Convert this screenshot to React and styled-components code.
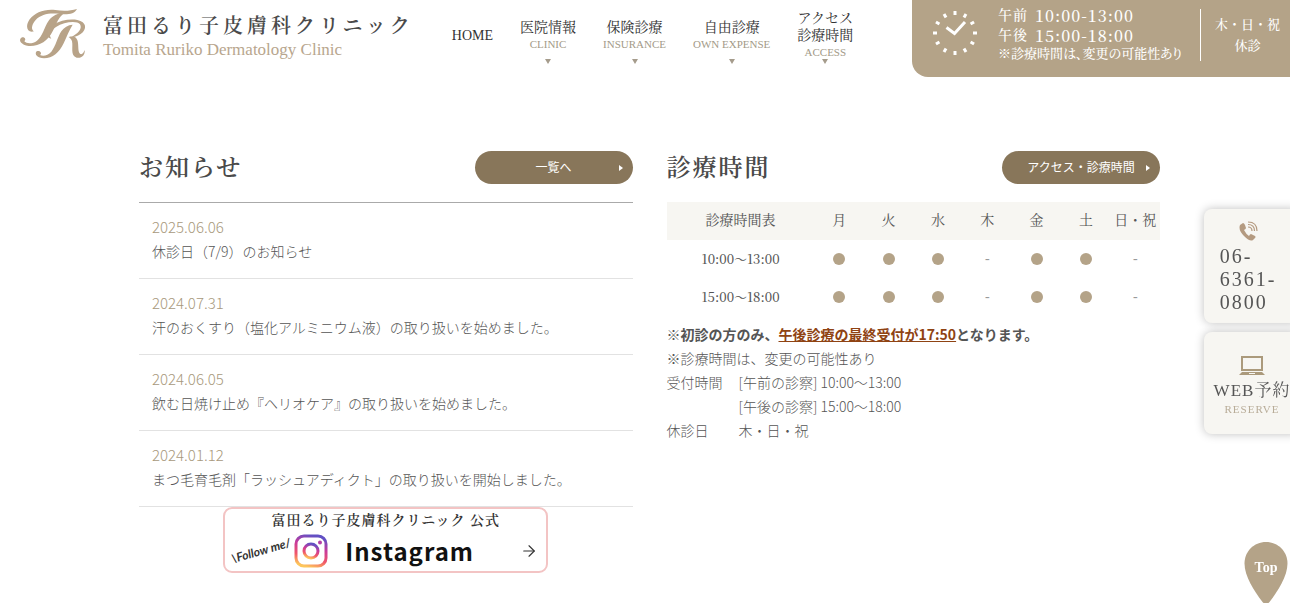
import React from "react"
import styled, { createGlobalStyle, css } from "styled-components"
import { FiArrowRight } from "react-icons/fi"

const serif = css`font-family: "Liberation Serif", "Noto Serif CJK JP", "Noto Sans CJK JP", serif;`
const mincho = css`font-family: "Noto Serif CJK JP", "Liberation Serif", "Noto Sans CJK JP", serif;`

const navItems = [
    { lines: ["医院情報"], sub: "CLINIC" },
    { lines: ["保険診療"], sub: "INSURANCE" },
    { lines: ["自由診療"], sub: "OWN EXPENSE" },
    { lines: ["アクセス", "診療時間"], sub: "ACCESS" },
]

const news = [
    { date: "2025.06.06", title: "休診日（7/9）のお知らせ" },
    { date: "2024.07.31", title: "汗のおくすり（塩化アルミニウム液）の取り扱いを始めました。" },
    { date: "2024.06.05", title: "飲む日焼け止め『ヘリオケア』の取り扱いを始めました。" },
    { date: "2024.01.12", title: "まつ毛育毛剤「ラッシュアディクト」の取り扱いを開始しました。" },
]

const days = ["月", "火", "水", "木", "金", "土", "日・祝"]
const openDays = [true, true, true, false, true, true, false]
const times = ["10:00～13:00", "15:00～18:00"]

export default function App() {
    return (
        <>
            <GlobalStyle />
            <Header>
                <Logo href="#">
                    <LogoMark />
                    <span>
                        <LogoTitle>富田るり子皮膚科クリニック</LogoTitle>
                        <LogoSub>Tomita Ruriko Dermatology Clinic</LogoSub>
                    </span>
                </Logo>
                <Nav>
                    <NavLink href="#">HOME</NavLink>
                    {navItems.map((item) => (
                        <NavLink href="#" key={item.sub} $arrow>
                            {item.lines.map((line) => <span key={line}>{line}</span>)}
                            <NavSub>{item.sub}</NavSub>
                        </NavLink>
                    ))}
                </Nav>
                <HoursPanel>
                    <ClockIcon />
                    <HoursText>
                        <HoursLine>午前 <b>10:00-13:00</b></HoursLine>
                        <HoursLine>午後 <b>15:00-18:00</b></HoursLine>
                        <HoursNote>※診療時間は、変更の可能性あり</HoursNote>
                    </HoursText>
                    <Closed>
                        <span>木・日・祝</span>
                        <span>休診</span>
                    </Closed>
                </HoursPanel>
            </Header>

            <Main>
                <section>
                    <SectionHead>
                        <Heading>お知らせ</Heading>
                        <PillLink href="#">一覧へ</PillLink>
                    </SectionHead>
                    <NewsList>
                        {news.map((item) => (
                            <NewsItem key={item.date}>
                                <NewsDate>{item.date}</NewsDate>
                                <NewsTitle href="#">{item.title}</NewsTitle>
                            </NewsItem>
                        ))}
                    </NewsList>
                    <Banner href="#">
                        <BannerTitle>富田るり子皮膚科クリニック 公式</BannerTitle>
                        <BannerRow>
                            <Follow>\Follow me/</Follow>
                            <InstagramIcon />
                            <BannerName>Instagram</BannerName>
                            <FiArrowRight size={18} strokeWidth={1.5} />
                        </BannerRow>
                    </Banner>
                </section>

                <section>
                    <SectionHead>
                        <Heading>診療時間</Heading>
                        <PillLink href="#">アクセス・診療時間</PillLink>
                    </SectionHead>
                    <TimeTable>
                        <thead>
                            <tr>
                                <th scope="col">診療時間表</th>
                                {days.map((day) => <th scope="col" key={day}>{day}</th>)}
                            </tr>
                        </thead>
                        <tbody>
                            {times.map((time) => (
                                <tr key={time}>
                                    <th scope="row">{time}</th>
                                    {openDays.map((open, index) => (
                                        <td key={index}>{open ? <Dot /> : "-"}</td>
                                    ))}
                                </tr>
                            ))}
                        </tbody>
                    </TimeTable>
                    <Notes>
                        <p><strong>※初診の方のみ、<em>午後診療の最終受付が17:50</em>となります。</strong></p>
                        <p>※診療時間は、変更の可能性あり</p>
                        <NoteList>
                            <dt>受付時間</dt>
                            <dd>[午前の診察] 10:00～13:00</dd>
                            <dd>[午後の診察] 15:00～18:00</dd>
                            <dt>休診日</dt>
                            <dd>木・日・祝</dd>
                        </NoteList>
                    </Notes>
                </section>
            </Main>

            <SideMenu>
                <SideCard href="tel:06-6361-0800">
                    <PhoneIcon />
                    <Phone>06-<br />6361-<br />0800</Phone>
                </SideCard>
                <SideCard href="#">
                    <LaptopIcon />
                    <Web>WEB予約</Web>
                    <Reserve>RESERVE</Reserve>
                </SideCard>
            </SideMenu>

            <TopLink href="#">
                <svg width="44" height="61" viewBox="0 0 44 61" aria-hidden="true">
                    <path d="M22 0C9.800 0 .5 9.500 .5 21.500C.5 34 10 49 18.500 60Q22 64 25.500 60C34 49 43.500 34 43.500 21.500C43.500 9.500 34.200 0 22 0Z" fill="#b4a388" />
                </svg>
                <span>Top</span>
            </TopLink>
        </>
    )
}

const LogoMark = () => (
    <svg width="70" height="50" viewBox="12 15 210 150" fill="#b8a388" aria-hidden="true">
        <path d="M60 82C40 88 32 68 47 46C62 26 92 14 124 18C148 22 168 21 189 15C182 30 160 33 138 30C108 26 82 30 65 48C53 62 50 76 60 82Z" />
        <path d="M152 27C134 38 128 58 116 82C102 112 74 128 44 126C22 123 12 108 22 101C31 97 38 106 31 112C38 120 56 120 69 110C87 95 90 70 104 50C116 34 132 27 152 27Z" />
        <path d="M176 62C166 78 158 98 149 118C136 146 116 163 90 163C70 163 60 150 68 142C77 137 86 147 78 153C88 158 102 154 112 143C126 126 130 100 142 82C150 70 162 63 176 62Z" />
        <path d="M112 104C94 100 96 76 118 62C138 49 168 44 190 48C218 53 220 76 200 90C190 97 180 100 168 101C192 90 206 74 198 61C188 49 150 54 126 69C108 80 104 94 112 104Z" />
        <path d="M164 99C178 96 186 98 190 108C195 122 190 144 199 150C205 152 209 146 212 138C214 154 202 164 188 161C168 156 178 128 174 112C172 105 168 102 164 99Z" />
    </svg>
)

const ClockIcon = () => (
    <svg width="46" height="46" viewBox="0 0 46 46" fill="none" stroke="#fff" aria-hidden="true">
        {[...Array(12)].map((_, i) => (
            <path key={i} d="M23 1V5" strokeWidth="3" transform={`rotate(${i * 30} 23 23)`} />
        ))}
        <path d="M14.500 17.500L22.500 23.500L33 12" strokeWidth="3" />
    </svg>
)

const PhoneIcon = () => (
    <svg width="20" height="20" viewBox="0 0 20 20" aria-hidden="true">
        <path d="M2 4L5 2Q6 2 7 4L8 7Q8 8 6 9Q8 13 11 15Q12 13 13 13L17 15Q18 16 17 17L15 19Q12 21 6 15Q0 9 2 4Z" fill="#b49a80" />
        <path d="M10 6Q14 6 14 10M10 3.500Q16.500 3.500 16.500 10M10 1Q19 1 19 10" fill="none" stroke="#b49a80" strokeWidth="1.200" />
    </svg>
)

const LaptopIcon = () => (
    <svg width="26" height="20" viewBox="0 0 26 20" aria-hidden="true">
        <rect x="3" y="1" width="20" height="13" fill="none" stroke="#ab9a7c" strokeWidth="2" />
        <path d="M3 16H23L26 19H0Z" fill="#ab9a7c" />
        <path d="M10 17.500H16" stroke="#f7f6f2" />
    </svg>
)

const InstagramIcon = () => (
    <svg width="34" height="34" viewBox="0 0 34 34" fill="none" aria-hidden="true">
        <defs>
            <linearGradient id="insta" x1="0.300" y1="1" x2="0.600" y2="0">
                <stop offset="0" stopColor="#fdc65b" />
                <stop offset="0.300" stopColor="#f0566a" />
                <stop offset="0.650" stopColor="#c83a9b" />
                <stop offset="1" stopColor="#6250c4" />
            </linearGradient>
        </defs>
        <rect x="2" y="2" width="30" height="30" rx="8" stroke="url(#insta)" strokeWidth="3" />
        <circle cx="17" cy="17" r="7" stroke="url(#insta)" strokeWidth="3" />
        <circle cx="26" cy="8.500" r="2" fill="#b63fa8" />
    </svg>
)

const GlobalStyle = createGlobalStyle`
* {
    box-sizing: border-box;
}

body {
    margin: 0;
    background: #fff;
    color: #555;
    font-family: "Noto Sans CJK JP", sans-serif;
    font-size: 14px;
    font-weight: 300;
    line-height: 24px;
    overflow-x: hidden;
}

a {
    color: inherit;
    text-decoration: none;
}

p, h2, ul, dl, dd {
    margin: 0;
    padding: 0;
}
`

const Header = styled.header`
${serif}
display: flex;
align-items: flex-start;
height: 77px;
padding-left: 18px;
white-space: nowrap;
`

const Logo = styled.a`
display: flex;
gap: 15px;
padding-top: 9px;
`

const LogoTitle = styled.span`
display: block;
padding-top: 4px;
color: #4a4a4a;
font-size: 20px;
font-weight: 600;
line-height: 27px;
letter-spacing: 4px;
`

const LogoSub = styled.span`
display: block;
color: #b8a68e;
font-size: 17px;
font-weight: 400;
line-height: 20px;
`

const Nav = styled.nav`
display: flex;
align-items: stretch;
gap: 27px;
height: 71px;
margin-left: 38px;
`

const NavLink = styled.a`
position: relative;
display: flex;
flex-direction: column;
align-items: center;
justify-content: center;
color: #333;
font-size: 14px;
font-weight: 400;
line-height: 17px;

${({ $arrow }) => $arrow && css`
&::after {
    content: "";
    position: absolute;
    bottom: 7px;
    border: 3px solid transparent;
    border-top: 5px solid #a59c8c;
    border-bottom: 0;
}
`}
`

const NavSub = styled.span`
color: #a39a88;
font-size: 11px;
`

const HoursPanel = styled.div`
display: flex;
align-items: flex-start;
width: 378px;
height: 77px;
margin-left: auto;
padding: 6px 10px 0 20px;
border-radius: 0 0 0 16px;
background: #b4a388;
color: #fff;
font-weight: 500;

svg {
    flex-shrink: 0;
    margin-top: 4px;
}
`

const HoursText = styled.div`
flex: 1;
padding-left: 20px;
`

const HoursLine = styled.p`
display: flex;
align-items: center;
gap: 7px;
height: 20px;
font-size: 14px;
letter-spacing: 1px;

b {
    ${mincho}
    font-size: 16px;
    font-weight: 500;
}
`

const HoursNote = styled.p`
font-size: 13px;
line-height: 16px;
font-feature-settings: "palt";
`

const Closed = styled.div`
display: flex;
flex-direction: column;
align-items: center;
margin-top: 3px;
padding: 5px 0 5px 14px;
border-left: 1px solid #fff;
font-size: 13px;
line-height: 21px;
`

const Main = styled.main`
display: grid;
grid-template-columns: repeat(2, minmax(0, 1fr));
gap: 34px;
padding: 74px 130px 30px 139px;
`

const SectionHead = styled.div`
display: flex;
align-items: center;
justify-content: space-between;
height: 51px;
padding-bottom: 18px;
`

const Heading = styled.h2`
${serif}
color: #4a4a4a;
font-size: 24px;
font-weight: 600;
letter-spacing: 2px;
`

const PillLink = styled.a`
position: relative;
width: 158px;
border-radius: 17px;
background: #88765a;
color: #fff;
font-size: 12px;
font-weight: 400;
line-height: 32px;
height: 33px;
text-align: center;

&::after {
    content: "";
    position: absolute;
    top: 14px;
    right: 10px;
    border: 3px solid transparent;
    border-left: 4px solid #fff;
    border-right: 0;
}
`

const NewsList = styled.ul`
border-top: 1px solid #aaa;
list-style: none;
`

const NewsItem = styled.li`
padding: 12px 13px 15px;
border-bottom: 1px solid #e2e2e2;
`

const NewsDate = styled.time`
display: block;
color: #a8997c;
font-size: 15px;
`

const NewsTitle = styled.a`
display: block;
`

const Banner = styled.a`
display: block;
width: 325px;
margin: 0 auto;
border: 2px solid #f3c4c4;
border-radius: 9px;
color: #333;
`

const BannerTitle = styled.span`
${serif}
display: block;
padding-top: 2px;
font-weight: 600;
line-height: 20px;
letter-spacing: 1px;
text-align: center;
`

const BannerRow = styled.span`
display: flex;
align-items: center;
height: 40px;
padding: 0 8px 0 3px;

svg {
    flex-shrink: 0;
}
`

const Follow = styled.span`
width: 66px;
font-family: "Lato", sans-serif;
font-size: 12px;
font-style: italic;
font-weight: 700;
line-height: 16px;
text-align: center;
white-space: nowrap;
transform: rotate(-16deg);
`

const BannerName = styled.span`
flex: 1;
padding-left: 17px;
color: #111;
font-size: 24px;
font-weight: 700;
letter-spacing: 1px;
`

const TimeTable = styled.table`
${serif}
width: 100%;
border-collapse: collapse;
table-layout: fixed;
text-align: center;

th, td {
    height: 38px;
    padding: 0;
    font-weight: 400;
    white-space: nowrap;
}

thead {
    background: #f7f6f2;
}

th:first-child {
    width: 30%;
}

tbody th {
    ${mincho}
    font-size: 13px;
    font-weight: 500;
}

td {
    color: #999;
}
`

const Dot = styled.span`
display: block;
width: 12px;
height: 12px;
margin: 0 auto;
border-radius: 50%;
background: #b4a388;
`

const Notes = styled.div`
margin-top: 6px;

strong {
    font-weight: 700;
}

em {
    color: #8f4313;
    font-style: normal;
    text-decoration: underline;
}
`

const NoteList = styled.dl`
display: grid;
grid-template-columns: 72px 1fr;

dd {
    grid-column: 2;
}
`

const SideMenu = styled.aside`
${serif}
position: fixed;
top: 209px;
right: -10px;
display: grid;
gap: 9px;
width: 96px;
`

const SideCard = styled.a`
display: flex;
flex-direction: column;
align-items: center;
padding: 12px 8px 9px 0;
border-radius: 8px;
background: #f7f6f2;
box-shadow: 0 0 10px rgba(0, 0, 0, 0.25);
color: #555;
font-weight: 400;
white-space: nowrap;

& + & {
    padding: 24px 0 18px;
}
`

const Phone = styled.span`
padding-top: 4px;
font-size: 20px;
line-height: 23px;
letter-spacing: 2px;
`

const Web = styled.span`
padding-top: 3px;
font-size: 17px;
line-height: 24px;
letter-spacing: 1px;
`

const Reserve = styled.span`
color: #b8ac98;
font-size: 11px;
line-height: 13px;
letter-spacing: 1px;
`

const TopLink = styled.a`
${serif}
position: fixed;
right: 2px;
bottom: 0;
display: grid;
justify-items: center;
color: #fff;
font-weight: 700;

svg, span {
    grid-area: 1 / 1;
}

span {
    padding-top: 14px;
}
`
